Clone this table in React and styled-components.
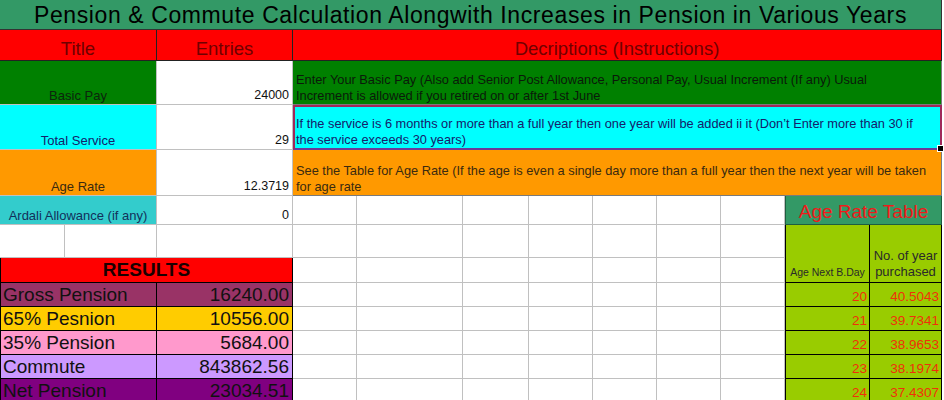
import React from "react";
import styled, { createGlobalStyle } from "styled-components";

const GlobalStyle = createGlobalStyle`
  html, body {
    margin: 0;
    padding: 0;
    background: #ffffff;
    font-family: "Liberation Sans", Arial, sans-serif;
  }
`;

const columns = [65, 92, 136, 64, 106, 66, 64, 64, 64, 64, 85, 72];
const rows = [30, 31, 44, 45, 46, 29, 33, 25, 24, 24, 24, 24, 24];

const Sheet = styled.div`
  display: grid;
  grid-template-columns: ${columns.map((c) => c + "px").join(" ")};
  grid-template-rows: ${rows.map((r) => r + "px").join(" ")};
  width: 944px;
  height: 400px;
  overflow: hidden;
`;

const Cell = styled.div`
  grid-column: ${(p) => p.$col};
  grid-row: ${(p) => p.$row};
  box-sizing: border-box;
  border-right: 1px solid ${(p) => p.$line || "#c0c0c0"};
  border-bottom: 1px solid ${(p) => p.$line || "#c0c0c0"};
  background: ${(p) => p.$bg || "#ffffff"};
  color: ${(p) => p.$fg || "#000000"};
  display: flex;
  align-items: flex-end;
  overflow: hidden;
  white-space: nowrap;
`;

const TitleBar = styled(Cell)`
  justify-content: center;
  font-size: 23px;
  letter-spacing: 0.6px;
  line-height: 26px;
  padding-bottom: 1px;
  border-color: #333333;
`;

const HeadCell = styled(Cell)`
  justify-content: center;
  font-size: 18.5px;
  line-height: 21px;
  border-color: #222222;
  padding-bottom: 1px;
`;

const LabelCell = styled(Cell)`
  justify-content: center;
  font-size: 13px;
  line-height: 15px;
  padding-bottom: 1px;
`;

const EntryCell = styled(Cell)`
  justify-content: flex-end;
  font-size: 12.5px;
  line-height: 15px;
  padding: 0 3px 1px 0;
  color: #111111;
`;

const DescCell = styled(Cell)`
  position: relative;
  overflow: visible;
  flex-direction: column;
  align-items: flex-start;
  justify-content: flex-end;
  font-size: 12.8px;
  line-height: 16px;
  padding: 0 2px 0 3px;
  z-index: ${(p) => (p.$selected ? 2 : 0)};
  ${(p) =>
    p.$selected &&
    `
    border: 2px solid #a0285a;
    border-bottom-color: #6b3a98;
    padding-left: 1px;
  `}
`;

const FillHandle = styled.span`
  position: absolute;
  right: -4px;
  bottom: -4px;
  width: 5px;
  height: 5px;
  background: #000000;
  border: 1px solid #ffffff;
`;

const BlankCell = styled(Cell)``;

const ResultHead = styled(Cell)`
  justify-content: center;
  font-size: 19px;
  font-weight: bold;
  line-height: 24px;
  color: #1a0000;
  border-color: #000000;
  border-left: 1px solid #000000;
`;

const ResultLabel = styled(Cell)`
  font-size: 19px;
  line-height: 23px;
  padding-left: 2px;
  border-color: #000000;
  border-left: 1px solid #000000;
  color: #111111;
`;

const ResultValue = styled(Cell)`
  justify-content: flex-end;
  font-size: 19px;
  line-height: 23px;
  padding-right: 3px;
  border-color: #000000;
  color: #111111;
`;

const AgeTitle = styled(Cell)`
  justify-content: center;
  font-size: 19px;
  line-height: 24px;
  color: #f01a1a;
  border-color: #1e5e40;
  border-left: 1px solid #1e5e40;
`;

const AgeHead = styled(Cell)`
  justify-content: center;
  text-align: center;
  white-space: normal;
  font-size: ${(p) => p.$size};
  line-height: 16px;
  padding-bottom: 2px;
  color: #2a2a2a;
  border-color: #000000;
  border-left: ${(p) => (p.$first ? "1px solid #000000" : "0")};
`;

const AgeValue = styled(Cell)`
  justify-content: flex-end;
  font-size: 13.5px;
  line-height: 16px;
  padding: 0 2px 1px 0;
  color: #f0300a;
  border-color: #000000;
  border-left: ${(p) => (p.$first ? "1px solid #000000" : "0")};
`;

const inputs = [
  {
    label: "Basic Pay",
    value: "24000",
    bg: "#008000",
    fg: "#0c260c",
    descFg: "#0a1a0a",
    desc: [
      "Enter Your Basic Pay (Also add Senior Post Allowance, Personal Pay, Usual Increment (If any) Usual",
      "Increment is allowed if you retired on or after 1st June",
    ],
  },
  {
    label: "Total Service",
    value: "29",
    bg: "#00ffff",
    fg: "#15206a",
    descFg: "#15206a",
    selected: true,
    desc: [
      "If the service is 6 months or more than a full year then one year will be added ii it (Don\u2019t Enter more than 30 if",
      "the service exceeds 30 years)",
    ],
  },
  {
    label: "Age Rate",
    value: "12.3719",
    bg: "#ff9900",
    fg: "#3a2a10",
    descFg: "#3a2a10",
    desc: [
      "See the Table for Age Rate (If the age is even a single day more than a full year then the next year will be taken",
      "for age rate",
    ],
  },
];

const results = [
  { label: "Gross Pension", value: "16240.00", bg: "#993366" },
  { label: "65% Pesnion", value: "10556.00", bg: "#ffcc00" },
  { label: "35% Pension", value: "5684.00", bg: "#ff99cc" },
  { label: "Commute", value: "843862.56", bg: "#cc99ff" },
  { label: "Net Pension", value: "23034.51", bg: "#800080" },
];

const ageRates = [
  ["20", "40.5043"],
  ["21", "39.7341"],
  ["22", "38.9653"],
  ["23", "38.1974"],
  ["24", "37.4307"],
];

const middleColumns = [4, 5, 6, 7, 8, 9, 10];

function Blanks({ row }) {
  return middleColumns.map((c) => <BlankCell key={`${row}-${c}`} $col={c} $row={row} />);
}

export default function App() {
  return (
    <>
      <GlobalStyle />
      <Sheet>
        <TitleBar $col="1 / 13" $row={1} $bg="#339966">
          Pension &amp; Commute Calculation Alongwith Increases in Pension in Various Years
        </TitleBar>

        <HeadCell $col="1 / 3" $row={2} $bg="#ff0000" $fg="#700000">Title</HeadCell>
        <HeadCell $col={3} $row={2} $bg="#ff0000" $fg="#700000">Entries</HeadCell>
        <HeadCell $col="4 / 13" $row={2} $bg="#ff0000" $fg="#700000">Decriptions (Instructions)</HeadCell>

        {inputs.map((item, i) => (
          <React.Fragment key={item.label}>
            <LabelCell $col="1 / 3" $row={i + 3} $bg={item.bg} $fg={item.fg}>{item.label}</LabelCell>
            <EntryCell $col={3} $row={i + 3}>{item.value}</EntryCell>
            <DescCell
              $col="4 / 13"
              $row={i + 3}
              $bg={item.bg}
              $fg={item.descFg}
              $selected={item.selected}
              $line="#7a7a7a"
            >
              {item.desc.map((line) => (
                <span key={line}>{line}</span>
              ))}
              {item.selected && <FillHandle />}
            </DescCell>
          </React.Fragment>
        ))}

        <LabelCell $col="1 / 3" $row={6} $bg="#33cccc" $fg="#12305a">Ardali Allowance (if any)</LabelCell>
        <EntryCell $col={3} $row={6}>0</EntryCell>
        <Blanks row={6} />
        <AgeTitle $col="11 / 13" $row={6} $bg="#339966">Age Rate Table</AgeTitle>

        <BlankCell $col={1} $row={7} />
        <BlankCell $col={2} $row={7} />
        <BlankCell $col={3} $row={7} />
        <Blanks row={7} />
        <AgeHead $col={11} $row="7 / 9" $bg="#99cc00" $size="10.5px" $first>Age Next B.Day</AgeHead>
        <AgeHead $col={12} $row="7 / 9" $bg="#99cc00" $size="13px">No. of year purchased</AgeHead>

        <ResultHead $col="1 / 4" $row={8} $bg="#ff0000">RESULTS</ResultHead>
        <Blanks row={8} />

        {results.map((r, i) => (
          <React.Fragment key={r.label}>
            <ResultLabel $col="1 / 3" $row={i + 9} $bg={r.bg}>{r.label}</ResultLabel>
            <ResultValue $col={3} $row={i + 9} $bg={r.bg}>{r.value}</ResultValue>
            <Blanks row={i + 9} />
            <AgeValue $col={11} $row={i + 9} $bg="#99cc00" $first>{ageRates[i][0]}</AgeValue>
            <AgeValue $col={12} $row={i + 9} $bg="#99cc00">{ageRates[i][1]}</AgeValue>
          </React.Fragment>
        ))}
      </Sheet>
    </>
  );
}
